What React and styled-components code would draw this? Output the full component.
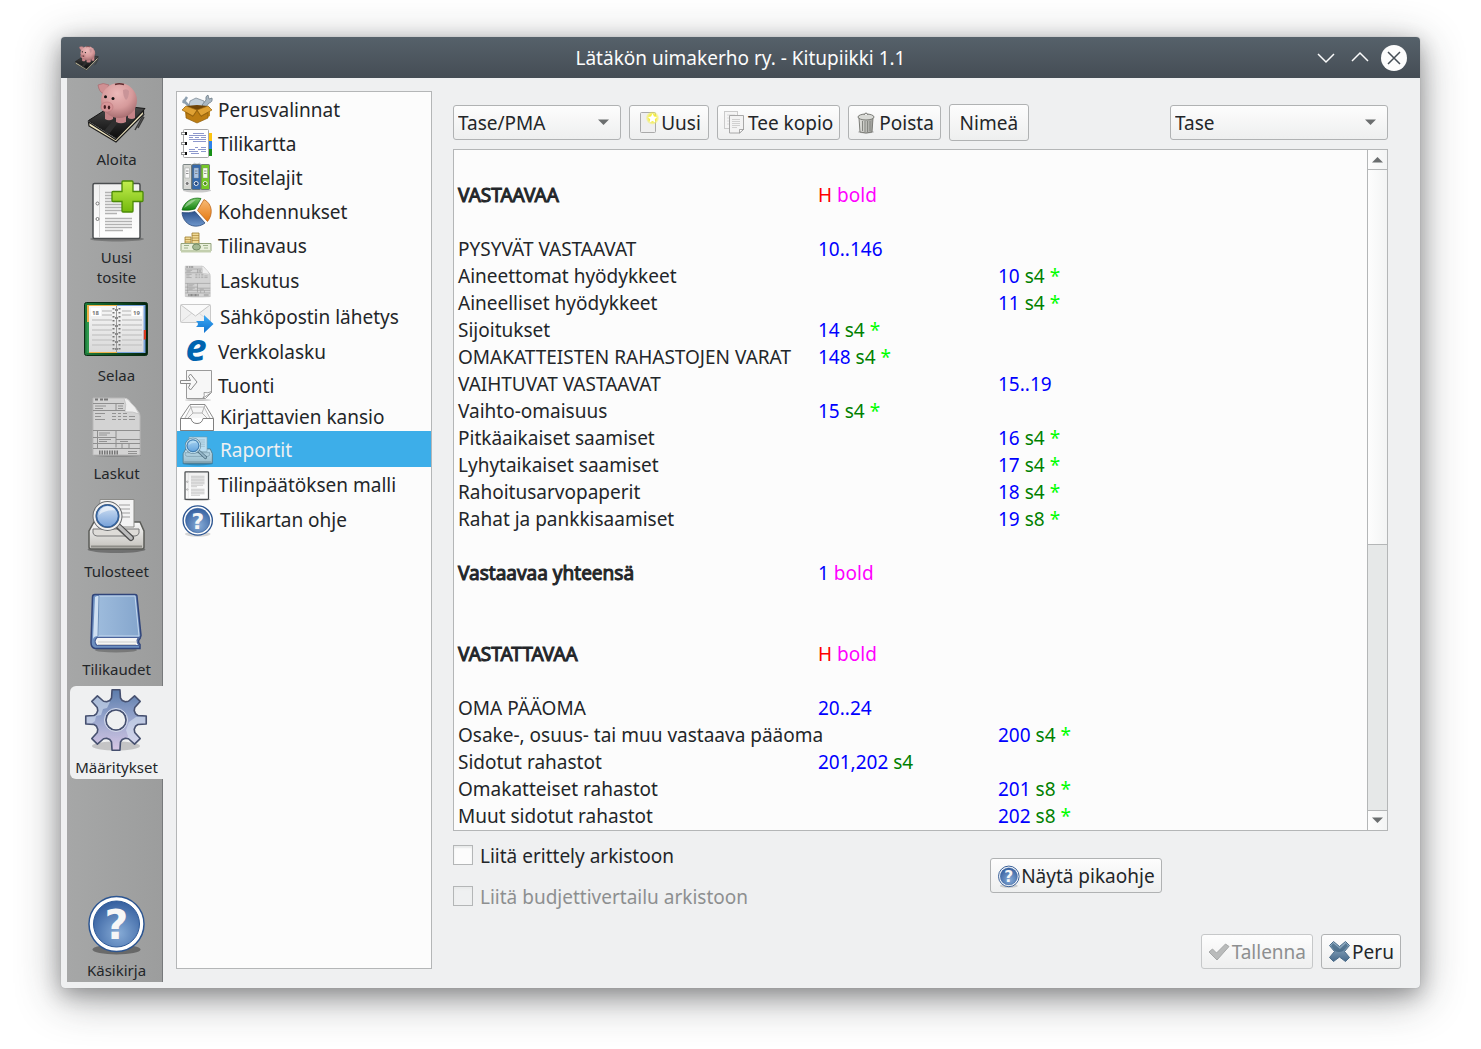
import React, { useState } from "react";
import styled, { createGlobalStyle, css } from "styled-components";

const GlobalStyle = createGlobalStyle`
  *, *::before, *::after { box-sizing: border-box; }
  body {
    margin: 0;
    background: #fff;
    color: #232629;
    font-family: "Noto Sans", "Open Sans", sans-serif;
    font-size: 19px;
    line-height: 28px;
  }
  button, select, input { font: inherit; color: inherit; margin: 0; }
  svg { overflow: visible; }
`;

const Desktop = styled.div`
  display: flex;
  height: 100vh;
  min-height: 800px;
  padding: 37px 61px 61px;
`;

const Window = styled.section`
  flex: 1;
  min-width: 0;
  display: flex;
  flex-direction: column;
  background: #eff0f1;
  border-radius: 4px;
  box-shadow: 0 0 1px #8c8f92, 0 6px 20px rgba(35, 38, 41, 0.3), 0 10px 44px rgba(35, 38, 41, 0.42);
`;

const TitleBar = styled.header`
  display: grid;
  grid-template-columns: 1fr auto 1fr;
  align-items: center;
  height: 41px;
  padding: 0 13px;
  border-radius: 4px 4px 0 0;
  background: linear-gradient(#56616a, #454d55);
  color: #fcfcfc;
`;

const Title = styled.h1`
  margin: 0;
  font-size: 19px;
  font-weight: 400;
`;

const WindowControls = styled.div`
  display: flex;
  justify-content: flex-end;
  gap: 8px;
`;

const ControlButton = styled.button`
  display: grid;
  place-items: center;
  width: 26px;
  height: 26px;
  padding: 0;
  border: 0;
  border-radius: 50%;
  background: ${(p) => (p.$close ? "#fcfcfc" : "transparent")};
  color: ${(p) => (p.$close ? "#454d55" : "#fcfcfc")};
`;

const Body = styled.div`
  flex: 1;
  min-height: 0;
  display: flex;
  padding: 0 0 6px 6px;
`;

const SideBar = styled.nav`
  flex: 0 0 96px;
  display: flex;
  flex-direction: column;
  gap: 5px;
  padding-left: 3px;
  background: linear-gradient(90deg, #a6a7a7, #9c9d9d);
  box-shadow: inset -1px 0 #77797b;
`;

const SideButton = styled.button`
  display: flex;
  flex-direction: column;
  align-items: center;
  gap: 5px;
  padding: 2px 0;
  border: 0;
  border-radius: 6px 0 0 6px;
  background: ${(p) => (p.$active ? "#eff0f1" : "transparent")};
  font-size: 15px;
  line-height: 20px;
  margin-top: ${(p) => (p.$last ? "auto" : "0")};
`;

const SideLabel = styled.span`
  max-width: ${(p) => (p.$narrow ? "50px" : "none")};
`;

const SectionList = styled.nav`
  flex: 0 0 256px;
  margin: 13px 0 13px 13px;
  border: 1px solid #b4b6b7;
  background: #fcfcfc;
`;

const SectionItem = styled.button`
  display: flex;
  align-items: center;
  gap: 5px;
  width: 100%;
  height: ${(p) => p.$height}px;
  padding: 1px 0 0 4px;
  border: 0;
  background: ${(p) => (p.$active ? "#3daee9" : "transparent")};
  color: ${(p) => (p.$active ? "#eff0f1" : "inherit")};
  white-space: nowrap;
  & svg { opacity: ${(p) => (p.$active ? 0.7 : 1)}; }
`;

const IconSlot = styled.span`
  display: grid;
  place-items: center;
  flex: 0 0 ${(p) => p.$width}px;
`;

const Main = styled.main`
  flex: 1;
  min-width: 0;
  display: flex;
  flex-direction: column;
  padding: 26px 19px 13px 21px;
`;

const Report = styled.div`
  flex: 1;
  min-height: 0;
  display: flex;
  flex-direction: column;
  margin-right: 13px;
`;

const ToolBar = styled.div`
  display: flex;
  align-items: center;
  gap: 8px;
  min-height: 37px;
  margin-bottom: 8px;
`;

const raised = css`
  border: 1px solid #b0b2b3;
  border-radius: 3px;
  background: linear-gradient(#fdfdfd, #eeefef);
`;

const Button = styled.button`
  ${raised}
  display: inline-flex;
  align-items: center;
  justify-content: center;
  min-width: 80px;
  height: ${(p) => (p.$tall ? 37 : 35)}px;
  padding: 0 6px;
  white-space: nowrap;
  &:disabled { color: #8d8f90; border-color: #c6c8c9; }
`;

const SelectBox = styled.div`
  position: relative;
  width: ${(p) => p.$width}px;
  margin-left: ${(p) => (p.$right ? "auto" : "0")};
  & > svg {
    position: absolute;
    right: 11px;
    top: 14px;
    pointer-events: none;
  }
`;

const Select = styled.select`
  ${raised}
  display: block;
  appearance: none;
  width: 100%;
  height: 35px;
  padding: 1px 28px 0 4px;
`;

const EditorFrame = styled.div`
  flex: 1;
  min-height: 0;
  display: flex;
  border: 1px solid #b4b6b7;
  background: #fcfcfc;
`;

const Editor = styled.div`
  flex: 1;
  min-width: 0;
  overflow: hidden;
  padding: 4px;
  outline: 0;
`;

const Line = styled.div`
  display: grid;
  grid-template-columns: 360px 180px 1fr;
  height: 27px;
  white-space: nowrap;
`;

const Name = styled.span`
  grid-column: 1;
  -webkit-text-stroke: ${(p) => (p.$bold ? "1px currentColor" : "0")};
`;

const Formula = styled.span`
  grid-column: ${(p) => p.$column};
`;

const tokenColors = { n: "#0000ff", s: "#008000", star: "#00ff00", h: "#ff0000", bold: "#ff00ff" };
const Token = styled.span`
  color: ${(p) => tokenColors[p.$kind]};
`;

const ScrollBar = styled.div`
  flex: 0 0 20px;
  display: flex;
  flex-direction: column;
  border-left: 1px solid #b4b6b7;
  background: #e6e8e8;
`;

const ScrollButton = styled.button`
  display: grid;
  place-items: center;
  height: 19px;
  padding: 0;
  border: 0;
  background: linear-gradient(90deg, #fdfdfd, #f3f4f4);
`;

const ScrollTrack = styled.div`
  flex: 1;
  border: solid #b4b6b7;
  border-width: 1px 0;
`;

const ScrollThumb = styled.div`
  border-bottom: 1px solid #b4b6b7;
  background: linear-gradient(90deg, #fdfdfd, #f3f4f4);
`;

const Options = styled.div`
  display: grid;
  grid-template-columns: 27fr 20fr;
  align-items: center;
  margin-top: 11px;
`;

const CheckList = styled.div`
  display: grid;
  gap: 13px;
`;

const CheckLabel = styled.label`
  display: flex;
  align-items: flex-start;
  gap: 7px;
  color: ${(p) => (p.$disabled ? "#8d8f90" : "inherit")};
`;

const CheckBox = styled.input`
  appearance: none;
  width: 20px;
  height: 20px;
  margin-top: 3px;
  border: 1px solid #b4b6b7;
  background: #fcfcfc;
  box-shadow: inset 0 2px 2px #e8eaea;
  &:checked { background: #3daee9; }
  &:disabled { background: #eff0f1; }
`;

const Footer = styled.footer`
  display: flex;
  justify-content: flex-end;
  gap: 8px;
  margin-top: 23px;
`;

const Svg = ({ size = 32, box = 32, children }) => (
  <svg width={size} height={size} viewBox={`0 0 ${box} ${box}`} aria-hidden="true">{children}</svg>
);

const Grad = ({ id, from, to, horizontal }) => (
  <linearGradient id={id} x1="0" y1="0" x2={horizontal ? 1 : 0} y2={horizontal ? 0 : 1}>
    <stop offset="0" stopColor={from} />
    <stop offset="1" stopColor={to} />
  </linearGradient>
);

const PigIcon = ({ size = 64 }) => (
  <Svg size={size} box={64}>
    <defs>
      <radialGradient id="pigSkin" cx="0.45" cy="0.3" r="0.7">
        <stop offset="0" stopColor="#ecb9b9" />
        <stop offset="0.6" stopColor="#d69a9b" />
        <stop offset="1" stopColor="#a86e71" />
      </radialGradient>
      <Grad id="pigBook" from="#4b4b4b" to="#0c0c0c" />
    </defs>
    <path d="M3.500 42l27 17.500 28-29v4L31 62 4 46z" fill="#ece2bd" stroke="#1b1b1b" strokeWidth="1.200" />
    <path d="M3.500 40.500L28 25l32 3.500L31 58z" fill="url(#pigBook)" stroke="#161616" />
    <path d="M19 51l21-25 5 1-21 27z" fill="#2f2f2f" />
    <path d="M50 50l9-16M53 48l6-11" stroke="#3a3a3a" strokeWidth="1.500" />
    <path d="M20 30h8v9q-4 2.500-8 0zM31 32h10v10q-5 2.500-10 0zM43 27h7v11q-3 2-7 0z" fill="#c48387" />
    <path d="M13 5q5-3 11 0l-5 9q-5-2-6-9z" fill="#d09093" stroke="#a8696d" strokeWidth="0.700" />
    <ellipse cx="34" cy="20.500" rx="18" ry="17.500" fill="url(#pigSkin)" />
    <path d="M38 10q4-2 6 1 0 7-3 9-3-3-3-10z" fill="#c99498" />
    <ellipse cx="22" cy="27" rx="6" ry="5" fill="#d79497" stroke="#b87579" strokeWidth="0.600" />
    <ellipse cx="19.800" cy="27" rx="1.200" ry="2" fill="#421d20" />
    <ellipse cx="24" cy="27.500" rx="1.200" ry="2" fill="#421d20" />
    <circle cx="20.500" cy="16.700" r="1.500" fill="#111" />
    <circle cx="28" cy="18.500" r="1.500" fill="#111" />
    <path d="M30 4.500q4-1.500 9 0" stroke="#5d2c2f" strokeWidth="1.500" fill="none" />
  </Svg>
);

const PageIcon = ({ size = 64, plus }) => (
  <Svg size={size} box={64}>
    <defs>
      <Grad id="pageFill" from="#f0f0f0" to="#ffffff" />
      <Grad id="plusFill" from="#c3ee4f" to="#73b90c" />
    </defs>
    <ellipse cx="32" cy="61" rx="27" ry="2.500" fill="#000" opacity="0.250" />
    <rect x="8" y="5.500" width="47" height="55" rx="1.500" fill="url(#pageFill)" stroke="#4b4e50" strokeWidth={plus ? 1.5 : 2.5} />
    <path d="M14.500 7v52" stroke="#d5d5d5" />
    <circle cx="12.500" cy="25.500" r="1.500" fill="#fff" stroke="#777" />
    <circle cx="12.500" cy="41" r="1.500" fill="#fff" stroke="#777" />
    <path d="M20 14.500h27M20 17.500h27M20 20.500h27M20 23.500h27M20 26.500h27M20 29.500h27M20 32.500h24M20 35.500h12M20 40.500h27M20 43.500h27M20 46.500h27M20 49.500h27M20 52.500h18" stroke="#b2b2b2" strokeWidth="1.300" />
    {plus && (
      <path d="M38 3h9q1 0 1 1v9.500h9q1 0 1 1v8q0 1-1 1h-9V33q0 1-1 1h-9q-1 0-1-1v-9.500h-9q-1 0-1-1v-8q0-1 1-1h9V4q0-1 1-1z" fill="url(#plusFill)" stroke="#4b8a06" strokeWidth="1.300" />
    )}
  </Svg>
);

const CalendarIcon = () => (
  <Svg size={64} box={64}>
    <defs>
      <Grad id="calCover" from="#1d7a3a" to="#04230d" horizontal />
      <Grad id="calPage" from="#f8f8f8" to="#d9d9d9" />
    </defs>
    <rect x="-0.500" y="6.500" width="63" height="53" rx="2" fill="url(#calCover)" stroke="#0b2d14" />
    <rect x="2" y="9" width="30" height="48" fill="#f0b14a" />
    <rect x="1.500" y="26" width="2.500" height="31" fill="#2f9a4f" />
    <rect x="32" y="9" width="28.500" height="48" fill="#7aa3dd" />
    <path d="M58.500 34h2.500v9l-2.500 1z" fill="#d83a20" />
    <rect x="4" y="10" width="27" height="46" fill="url(#calPage)" />
    <rect x="32" y="10" width="26.500" height="46" fill="url(#calPage)" />
    <path d="M17 15h10M17 19h10M37 15h9M37 19h9M7 24h20M7 29h20M7 34h20M7 39h20M7 44h20M7 49h20M37 24h20M37 29h20M37 34h20M37 39h20M37 44h20M37 49h20" stroke="#c9c9c9" strokeWidth="1.500" />
    <rect x="6" y="12" width="10" height="8" fill="#fff" />
    <rect x="47" y="12" width="10" height="8" fill="#fff" />
    <text x="7" y="19" fontSize="6" fontWeight="700" fill="#777">18</text>
    <text x="48" y="19" fontSize="6" fontWeight="700" fill="#777">19</text>
    <path d="M31.500 10v46" stroke="#9b9b9b" />
    <path d="M28.500 12v43M34.500 12v43" stroke="#777" strokeWidth="2" strokeDasharray="1.500 2.500" />
    <path d="M30 14h3M30 22h3M30 30h3M30 38h3M30 46h3M30 53h3" stroke="#8a8a8a" strokeWidth="2" />
  </Svg>
);

const InvoiceIcon = ({ size = 64 }) => (
  <Svg size={size} box={64}>
    <ellipse cx="32" cy="61.500" rx="24" ry="1.500" fill="#000" opacity="0.150" />
    <path d="M8 4h31q4 0 7 5l7 8q2 2 2 5v39H8z" fill="#d3d3d3" stroke="#b9b9b9" />
    <path d="M39 4q3 6 1 14 8-1 14 2-3-7-8-11-3-5-7-5z" fill="#eee" stroke="#bdbdbd" strokeWidth="0.700" />
    <path d="M10 5.500h3M15 5.500h3M19 5.500h4" stroke="#777" strokeWidth="2" />
    <path d="M8 9.500h31M31 9.500v7M8 16.500h32M8 36.500h47M31 36.500v17M31 45.500h24M8 43.500h23M8 49.500h47M8 54.500h47M12.500 36.500v18M37 50v4M44 50v4" stroke="#8e8e8e" fill="none" />
    <path d="M10 12h11M10 14.500h8M33 12h5M33 14.500h5M10 19.500h10M10 22.500h6M10 25.500h10M27 19.500h4M33 19.500h3M38 19.500h4M27 22.500h4M33 22.500h3M38 22.500h4M44 22.500h6M27 25.500h4M33 25.500h3M38 25.500h4M44 25.500h6M14 39h11M14 41h8M14 45.500h12M14 47.500h8M35 47.500h8M43 57.500h9M43 59.500h9" stroke="#929292" />
    <path d="M14 58.500h19" stroke="#777" strokeWidth="4" strokeDasharray="1.500 1" />
  </Svg>
);

const PreviewIcon = ({ size = 64 }) => (
  <Svg size={size} box={64}>
    <defs>
      <Grad id="prnBody" from="#fafafa" to="#c2c0ba" />
      <Grad id="prnLens" from="#dce9f7" to="#6e9bd6" />
    </defs>
    <ellipse cx="31.500" cy="57.500" rx="29" ry="3.500" fill="#000" opacity="0.300" />
    <path d="M9 30h46l4 9v16q0 2-2 2H6q-2 0-2-2V39z" fill="url(#prnBody)" stroke="#5b5c58" strokeWidth="1.500" />
    <path d="M15 7.500h34V35H13z" fill="#f3f3f3" stroke="#8b8b88" />
    <path d="M34 13h11M34 17h11M36 21h9M36 25h9" stroke="#bcbcbc" strokeWidth="1.500" />
    <path d="M8 37h46v4q-1 3-4 3H12q-3 0-4-3z" fill="#dedcd8" stroke="#777" />
    <path d="M6 54.500h51" stroke="#8e8d88" strokeWidth="2" />
    <path d="M33 34l13 12" stroke="#4d4d4d" strokeWidth="6" strokeLinecap="round" />
    <path d="M34 34.500l12 11.500" stroke="#bdbdbd" strokeWidth="3.500" strokeLinecap="round" />
    <circle cx="22.500" cy="24" r="13" fill="url(#prnLens)" stroke="#686a6c" strokeWidth="4" />
    <circle cx="22.500" cy="24" r="13" fill="none" stroke="#f2f2f2" strokeWidth="2" />
    <circle cx="22.500" cy="24" r="11" fill="none" stroke="#34629d" strokeWidth="1.500" />
    <path d="M14 23q1-8 9-8.500 6 0 7 4-9-1-16 4.500z" fill="#fff" opacity="0.550" />
  </Svg>
);

const BookIcon = () => (
  <Svg size={64} box={64}>
    <defs><Grad id="bookCover" from="#9dbbdc" to="#85a6cd" horizontal /></defs>
    <ellipse cx="31" cy="60" rx="21" ry="2.500" fill="#000" opacity="0.250" />
    <path d="M10 4.500h40q2 0 2 2l4 39-1 3q-3 3 0 6v4H10q-4-1-4-6L7.500 7q0-2.500 2.500-2.500z" fill="#6d8fc0" stroke="#31457a" strokeWidth="1.500" />
    <path d="M12 47.500h42q-4 3 0 8H12q-4-4 0-8z" fill="#f5f5f5" stroke="#4b639a" strokeWidth="1.200" />
    <path d="M13 52h39M13 54.500h38" stroke="#cdcdcd" />
    <path d="M14 6h36l4 40H13z" fill="url(#bookCover)" stroke="#c5d8ee" />
    <path d="M10 7L8 49q1-3 5-3l1-40h-2z" fill="#cfe0f2" />
    <path d="M14 6l-1 40" stroke="#6c8fba" />
  </Svg>
);

const gearPath = (() => {
  const points = [];
  for (let i = 0; i < 8; i += 1) {
    const a = (i * Math.PI) / 4;
    [[-0.31, 20.5], [-0.2, 22.5], [-0.13, 30.5], [0.13, 30.5], [0.2, 22.5], [0.31, 20.5]].forEach(([d, r]) => {
      points.push(`${(31 + r * Math.sin(a + d)).toFixed(2)} ${(32 - r * Math.cos(a + d)).toFixed(2)}`);
    });
  }
  return `M${points.join("L")}ZM41 32a10 10 0 1 0-20 0a10 10 0 1 0 20 0Z`;
})();

const GearIcon = () => (
  <Svg size={64} box={64}>
    <defs>
      <linearGradient id="gearFill" x1="0" y1="0" x2="0" y2="1">
        <stop offset="0" stopColor="#5b7cab" />
        <stop offset="0.450" stopColor="#94a3cb" />
        <stop offset="1" stopColor="#d7c7e4" />
      </linearGradient>
      <clipPath id="gearClip"><path d={gearPath} clipRule="evenodd" /></clipPath>
    </defs>
    <ellipse cx="31" cy="58" rx="24" ry="4.500" fill="#000" opacity="0.180" />
    <path d={gearPath} fill="url(#gearFill)" fillRule="evenodd" />
    <g clipPath="url(#gearClip)" fill="#dbe6f5" opacity="0.550">
      <path d="M0 34V8h20l5 6-3 6-4 1-2 6-5 1-1 5-4 3z" />
      <path d="M64 28l-13 1-7 5-3 8 2 6-3 7 12 7 12-20z" />
    </g>
    <path d={gearPath} fill="none" stroke="#46506f" strokeWidth="1.600" strokeLinejoin="round" />
    <circle cx="31" cy="32" r="11.500" fill="none" stroke="#d6dcec" />
  </Svg>
);

const HelpIcon = ({ size = 64 }) => (
  <Svg size={size} box={64}>
    <defs>
      <radialGradient id="helpFill" cx="0.550" cy="0.700" r="0.700">
        <stop offset="0" stopColor="#86abd6" />
        <stop offset="1" stopColor="#355f9f" />
      </radialGradient>
    </defs>
    <ellipse cx="31.500" cy="58.500" rx="24" ry="5" fill="#000" opacity={size < 64 ? 0.15 : 0.35} />
    <circle cx="31.500" cy="33" r="27.500" fill="#fff" stroke="#2c5591" strokeWidth={size < 64 ? 2.5 : 1.5} />
    <circle cx="31.500" cy="33" r="23" fill="url(#helpFill)" stroke="#2f5a98" />
    <text x="31.500" y="48" textAnchor="middle" fontSize="41" fontWeight="700" fill="#f6f6f6" fontFamily="DejaVu Sans, sans-serif">?</text>
  </Svg>
);

const ToolboxIcon = () => (
  <Svg>
    <path d="M2 6l6 6M6 3l-4 6" stroke="#8ea0b0" strokeWidth="2.500" />
    <path d="M9 7l6-3 8 3 1 5-8 3-8-3z" fill="#c3cfd9" stroke="#73808b" strokeWidth="0.700" />
    <path d="M21 11l4-5q-1-4 2-5l1 4 3-1q1 4-3 5l-4 5z" fill="#a9b7c2" stroke="#657480" strokeWidth="0.700" />
    <path d="M3 13l13 3 13-3v9l-13 6-11-5z" fill="#c78a1d" />
    <path d="M5 12l11-1 11 1-11 5z" fill="#6f4406" />
    <path d="M5 12l11 4-4 6-11-6zM27 12l-11 4 4 6 11-6z" fill="#e0a234" stroke="#99650e" strokeWidth="0.700" />
    <path d="M5 18.500l7 4 4-6 4 6 7-4v5.500l-11 5-11-5z" fill="#bd7d12" stroke="#8e5d0b" strokeWidth="0.700" />
  </Svg>
);

const NotebookIcon = () => (
  <Svg>
    <path d="M27 5h4v8h-4z" fill="#fcc310" /><path d="M27 13h4v8h-4z" fill="#2b82ea" /><path d="M27 21h4v7h-4z" fill="#159016" />
    <rect x="2.500" y="1.500" width="25" height="28" rx="1" fill="#fff" stroke="#a7a7a7" />
    <path d="M0 5.500h5M0 15.500h5M0 25.500h5" stroke="#929292" strokeWidth="3" />
    <path d="M1 5.500h3M1 15.500h3M1 25.500h3" stroke="#fff" />
    <path d="M4 4h2v3H4zM4 14h2v3H4zM4 24h2v3H4z" fill="#111" />
    <path d="M12 5.500h11M8 7.500h17M8 9.500h4M14 9.500h4M20 9.500h5M8 11.500h17M12 13.500h13M14 19.500h3M20 19.500h5M8 21.500h6M17 21.500h8M8 23.500h9M20 23.500h5M10 25.500h8" stroke="#8d98cc" />
  </Svg>
);

const Binder = ({ x, body, band, hole }) => (
  <g>
    <rect x={x} y="2.500" width="8.500" height="25" rx="0.700" fill={body} stroke="#5f6b6b" strokeWidth="0.800" />
    <rect x={x + 2} y="6" width="4.500" height="10" fill={band} stroke="#8b9090" strokeWidth="0.400" />
    <path d={`M${x + 3} 9h2.500M${x + 3} 11.500h2.500`} stroke="#777" strokeWidth="0.800" />
    <circle cx={x + 4.2} cy="21.500" r="2" fill={hole} stroke="#eee" />
  </g>
);

const BindersIcon = () => (
  <Svg>
    <ellipse cx="16" cy="28.500" rx="14" ry="2" fill="#000" opacity="0.200" />
    <path d="M12 4l1-3 3 1 3-1 1 3z" fill="#e9eef2" stroke="#9aa6ae" strokeWidth="0.500" />
    <Binder x={2} body="#d5d7d3" band="#f8f8f8" hole="#777" />
    <Binder x={11} body="#3569ab" band="#a9c3e3" hole="#1c417a" />
    <Binder x={20} body="#75c926" band="#f4ffe8" hole="#4a8d10" />
  </Svg>
);

const PieIcon = () => (
  <Svg>
    <defs>
      <Grad id="pieGreen" from="#78c86a" to="#11800e" />
      <Grad id="pieBlue" from="#2c518c" to="#6f97cb" />
      <Grad id="pieOrange" from="#f7ba76" to="#e57912" />
    </defs>
    <path d="M1 14C3 6 11 .5 20 2.500L14 13q-6 2-13 1z" fill="url(#pieGreen)" stroke="#0d6510" strokeWidth="0.700" />
    <path d="M1 16.500q7 1 13-1L24 27C15 34 2 29 1 16.500z" fill="url(#pieBlue)" stroke="#1e3e70" strokeWidth="0.700" />
    <path d="M23 3.500C32 8 32 19 26.500 25.500L16.500 14.500z" fill="url(#pieOrange)" stroke="#b65a0a" strokeWidth="0.700" />
    <path d="M3 12q3-8 12-8.500-5 5-12 8.500z" fill="#fff" opacity="0.350" />
  </Svg>
);

const MoneyIcon = () => (
  <Svg>
    <path d="M4 7h6v8H4zM11 3h7v12h-7z" fill="#f0d994" stroke="#9d7b2c" strokeWidth="0.800" />
    <path d="M4 9.500h6M4 12h6M11 5.500h7M11 8h7M11 10.500h7" stroke="#a98436" strokeWidth="0.700" />
    <path d="M0 13.500h30V21H0z" fill="#e9efdb" stroke="#94a37c" />
    <path d="M0 20h30v2.500H0z" fill="#c3cfae" />
    <ellipse cx="15.500" cy="17" rx="4" ry="3" fill="#a3b892" stroke="#5b774c" strokeWidth="0.700" />
    <path d="M3 15.500h5M22 15.500h5M3 18h4M23 18h4" stroke="#9db08a" />
  </Svg>
);

const MailIcon = () => (
  <Svg size={34} box={34}>
    <defs><Grad id="mailArrow" from="#3daaf5" to="#1173cf" /></defs>
    <rect x="-0.500" y="4.500" width="30" height="18" rx="1" fill="#f0f0f0" stroke="#c9c9c9" />
    <path d="M0 22l11-9M29 22l-11-9" stroke="#dadada" fill="none" />
    <path d="M0 5l14.500 11L29 5" fill="#fafafa" stroke="#c6c6c6" />
    <path d="M15 21h8v-6l9.500 9-9.500 9v-6h-8q4-3 0-6z" fill="url(#mailArrow)" />
  </Svg>
);

const EInvoiceIcon = () => (
  <Svg>
    <text x="15" y="25" textAnchor="middle" fontSize="38" fontWeight="700" fontStyle="italic" fill="#0064b0" fontFamily="Open Sans, sans-serif">e</text>
  </Svg>
);

const ImportIcon = () => (
  <Svg>
    <ellipse cx="17" cy="30" rx="13" ry="1" fill="#000" opacity="0.200" />
    <path d="M5.500 0.500h25v22l-6 6h-19z" fill="#f7f7f7" stroke="#9a9a9a" />
    <path d="M30.500 22.500l-8.500 5.500q2-2 1-5.500 4 1 7.500-1z" fill="#fff" stroke="#8a8a8a" strokeWidth="0.800" />
    <path d="M-.5 10.500h10l-2-4 2-2.500 6.500 8-6.500 8-2-2.500 2-4h-10z" fill="#f8f8f8" stroke="#8a8a8a" />
  </Svg>
);

const TrayIcon = () => (
  <Svg size={34} box={34}>
    <path d="M-.5 18.500L9 4.500h15l8.500 14v12H-.5z" fill="#fff" stroke="#8b8b8b" />
    <path d="M4 18L10 7h13l6 11" fill="#f6f6f6" stroke="#bbb" />
    <path d="M9 5l3 8h9l3-8M12 13l-5 5M21 13l5 5" fill="none" stroke="#b4b4b4" />
    <path d="M-.5 18.500H10q1 5 6 5t6-5h10.500v12H-.5z" fill="#fff" stroke="#808080" />
  </Svg>
);

const NewIcon = () => (
  <Svg size={24} box={24}>
    <defs>
      <radialGradient id="newGlow">
        <stop offset="0.500" stopColor="#f6ef3a" />
        <stop offset="1" stopColor="#f6ef3a" stopOpacity="0.200" />
      </radialGradient>
    </defs>
    <rect x="3.500" y="1.500" width="15" height="20" rx="1" fill="#efefef" stroke="#aaa" />
    <circle cx="15.500" cy="7" r="6.500" fill="url(#newGlow)" />
    <path d="M15.500 2.500l1.500 3 3 .5-2.200 2.300.6 3.200-2.900-1.500-2.900 1.500.6-3.200L11 6l3-.5z" fill="#fff" />
  </Svg>
);

const CopyIcon = () => (
  <Svg size={24} box={24}>
    <rect x="0.500" y="0.500" width="13" height="17" fill="#f5f5f5" stroke="#cbcbcb" />
    <path d="M3 4h8M3 7h2M3 10h2M3 13h2" stroke="#dadada" />
    <path d="M5.500 4.500h14v14l-4 3.500h-10z" fill="#f3f3f3" stroke="#a8a8a8" />
    <path d="M19.500 18.500l-4 3.500v-3.500z" fill="#fff" stroke="#888" strokeWidth="0.700" />
    <path d="M8 8.500h8M8 10.500h8M8 12.500h8M8 14.500h8M8 16.500h5" stroke="#d0d0d0" />
  </Svg>
);

const TrashIcon = () => (
  <Svg size={24} box={24}>
    <defs><Grad id="trashBody" from="#e2e2de" to="#9b9c97" horizontal /></defs>
    <ellipse cx="11" cy="21" rx="8" ry="1.500" fill="#000" opacity="0.250" />
    <path d="M4 7h14l-1 14q-6 2-12 0z" fill="url(#trashBody)" stroke="#7b7c77" />
    <path d="M7.500 10v10M10 10v11M12.500 10v11M15 10v10" stroke="#858681" />
    <ellipse cx="11" cy="6" rx="8" ry="3" fill="#d9dad6" stroke="#7b7c77" />
    <path d="M9 4q2-4 4 0" fill="#eee" stroke="#7b7c77" />
  </Svg>
);

const SaveIcon = () => (
  <Svg size={24} box={24}>
    <path d="M1 12l3.500-3 4 4 9-9 3.500 2.500L9 20z" fill="#b9bbbb" stroke="#a6a8a8" strokeLinejoin="round" />
  </Svg>
);

const CancelIcon = () => (
  <Svg size={24} box={24}>
    <defs><Grad id="cancelFill" from="#9db8cc" to="#47698a" /></defs>
    <path d="M5.500 1.500l6 5 6-5 4 4-5 6 5 6-4 4-6-4.500-6 4.500-4-4 5-6-5-6z" fill="url(#cancelFill)" stroke="#4a6b88" strokeLinejoin="round" />
    <path d="M5 3l7 6 6-6 2 3-5 5q-4 2-8 0L3 6z" fill="#345877" opacity="0.600" />
  </Svg>
);

const Arrow = ({ up }) => (
  <svg width="12" height="7" viewBox="0 0 12 7" aria-hidden="true">
    <path d={up ? "M0 6.500h11L5.500 1z" : "M0 .500h11L5.500 6z"} fill="#6b6e6f" />
  </svg>
);

const sideItems = [
  ["Aloita", PigIcon], ["Uusi tosite", () => <PageIcon plus />], ["Selaa", CalendarIcon], ["Laskut", InvoiceIcon],
  ["Tulosteet", PreviewIcon], ["Tilikaudet", BookIcon], ["Määritykset", GearIcon], ["Käsikirja", HelpIcon],
];

const sections = [
  { label: "Perusvalinnat", icon: <ToolboxIcon />, height: 34, slot: 32 },
  { label: "Tilikartta", icon: <NotebookIcon />, height: 34, slot: 32 },
  { label: "Tositelajit", icon: <BindersIcon />, height: 34, slot: 32 },
  { label: "Kohdennukset", icon: <PieIcon />, height: 34, slot: 32 },
  { label: "Tilinavaus", icon: <MoneyIcon />, height: 34, slot: 32 },
  { label: "Laskutus", icon: <InvoiceIcon size={34} />, height: 36, slot: 34 },
  { label: "Sähköpostin lähetys", icon: <MailIcon />, height: 36, slot: 34 },
  { label: "Verkkolasku", icon: <EInvoiceIcon />, height: 34, slot: 32 },
  { label: "Tuonti", icon: <ImportIcon />, height: 34, slot: 32 },
  { label: "Kirjattavien kansio", icon: <TrayIcon />, height: 29, slot: 34 },
  { label: "Raportit", icon: <PreviewIcon size={34} />, height: 36, slot: 34 },
  { label: "Tilinpäätöksen malli", icon: <PageIcon size={32} />, height: 34, slot: 32 },
  { label: "Tilikartan ohje", icon: <HelpIcon size={34} />, height: 36, slot: 34 },
];

const reportLines = [
  [],
  ["VASTAAVAA", 2, "H bold", true],
  [],
  ["PYSYVÄT VASTAAVAT", 2, "10..146"],
  ["Aineettomat hyödykkeet", 3, "10 s4 *"],
  ["Aineelliset hyödykkeet", 3, "11 s4 *"],
  ["Sijoitukset", 2, "14 s4 *"],
  ["OMAKATTEISTEN RAHASTOJEN VARAT", 2, "148 s4 *"],
  ["VAIHTUVAT VASTAAVAT", 3, "15..19"],
  ["Vaihto-omaisuus", 2, "15 s4 *"],
  ["Pitkäaikaiset saamiset", 3, "16 s4 *"],
  ["Lyhytaikaiset saamiset", 3, "17 s4 *"],
  ["Rahoitusarvopaperit", 3, "18 s4 *"],
  ["Rahat ja pankkisaamiset", 3, "19 s8 *"],
  [],
  ["Vastaavaa yhteensä", 2, "1 bold", true],
  [],
  [],
  ["VASTATTAVAA", 2, "H bold", true],
  [],
  ["OMA PÄÄOMA", 2, "20..24"],
  ["Osake-, osuus- tai muu vastaava pääoma", 3, "200 s4 *"],
  ["Sidotut rahastot", 2, "201,202 s4"],
  ["Omakatteiset rahastot", 3, "201 s8 *"],
  ["Muut sidotut rahastot", 3, "202 s8 *"],
];

const kindOf = (word) => {
  if (word === "H") return "h";
  if (word === "bold") return "bold";
  if (word === "*") return "star";
  return word.startsWith("s") ? "s" : "n";
};

export default function App() {
  const [view, setView] = useState("Määritykset");
  const [section, setSection] = useState("Raportit");
  return (
    <>
      <GlobalStyle />
      <Desktop>
        <Window>
          <TitleBar>
            <PigIcon size={26} />
            <Title>Lätäkön uimakerho ry. - Kitupiikki 1.1</Title>
            <WindowControls>
              <ControlButton aria-label="Pienennä">
                <svg width="18" height="18" viewBox="0 0 18 18" fill="none" stroke="currentColor" strokeWidth="1.500"><path d="M1 5l8 8 8-8" /></svg>
              </ControlButton>
              <ControlButton aria-label="Suurenna">
                <svg width="18" height="18" viewBox="0 0 18 18" fill="none" stroke="currentColor" strokeWidth="1.500"><path d="M1 12l8-8 8 8" /></svg>
              </ControlButton>
              <ControlButton $close aria-label="Sulje">
                <svg width="18" height="18" viewBox="0 0 18 18" fill="none" stroke="currentColor" strokeWidth="1.500"><path d="M3 3l12 12M15 3L3 15" /></svg>
              </ControlButton>
            </WindowControls>
          </TitleBar>
          <Body>
            <SideBar>
              {sideItems.map(([label, Icon], i) => (
                <SideButton key={label} $active={label === view} $last={i === sideItems.length - 1} onClick={() => setView(label)}>
                  <Icon />
                  <SideLabel $narrow={label.includes(" ")}>{label}</SideLabel>
                </SideButton>
              ))}
            </SideBar>
            <SectionList>
              {sections.map((s) => (
                <SectionItem key={s.label} $height={s.height} $active={s.label === section} onClick={() => setSection(s.label)}>
                  <IconSlot $width={s.slot}>{s.icon}</IconSlot>
                  {s.label}
                </SectionItem>
              ))}
            </SectionList>
            <Main>
              <Report>
                <ToolBar>
                  <SelectBox $width={168}>
                    <Select aria-label="Raportti" defaultValue="Tase/PMA"><option>Tase/PMA</option></Select>
                    <Arrow />
                  </SelectBox>
                  <Button><NewIcon />Uusi</Button>
                  <Button><CopyIcon />Tee kopio</Button>
                  <Button><TrashIcon />Poista</Button>
                  <Button $tall>Nimeä</Button>
                  <SelectBox $width={218} $right>
                    <Select aria-label="Raportin tyyppi" defaultValue="Tase"><option>Tase</option></Select>
                    <Arrow />
                  </SelectBox>
                </ToolBar>
                <EditorFrame>
                  <Editor role="textbox" aria-multiline="true" aria-label="Raportin määrittely" contentEditable suppressContentEditableWarning spellCheck={false}>
                    {reportLines.map(([name, column, formula, bold], i) => (
                      <Line key={i}>
                        {name && <Name $bold={bold}>{name}</Name>}
                        {formula && (
                          <Formula $column={column}>
                            {formula.split(" ").map((word, j) => (
                              <React.Fragment key={j}>{j > 0 && " "}<Token $kind={kindOf(word)}>{word}</Token></React.Fragment>
                            ))}
                          </Formula>
                        )}
                      </Line>
                    ))}
                  </Editor>
                  <ScrollBar>
                    <ScrollButton aria-label="Vieritä ylös"><Arrow up /></ScrollButton>
                    <ScrollTrack><ScrollThumb style={{ height: `${(25 / 42.7) * 100}%` }} /></ScrollTrack>
                    <ScrollButton aria-label="Vieritä alas"><Arrow /></ScrollButton>
                  </ScrollBar>
                </EditorFrame>
                <Options>
                  <CheckList>
                    <CheckLabel><CheckBox type="checkbox" />Liitä erittely arkistoon</CheckLabel>
                    <CheckLabel $disabled><CheckBox type="checkbox" disabled />Liitä budjettivertailu arkistoon</CheckLabel>
                  </CheckList>
                  <div><Button><HelpIcon size={24} />Näytä pikaohje</Button></div>
                </Options>
              </Report>
              <Footer>
                <Button disabled><SaveIcon />Tallenna</Button>
                <Button><CancelIcon />Peru</Button>
              </Footer>
            </Main>
          </Body>
        </Window>
      </Desktop>
    </>
  );
}
